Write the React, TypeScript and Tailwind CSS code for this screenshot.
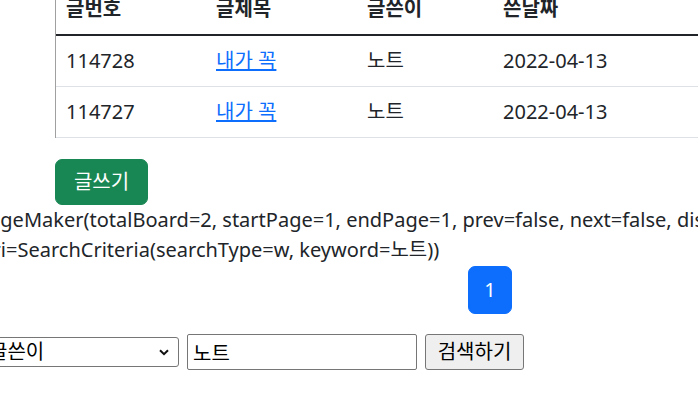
import React from 'react';

const rows = [
  { no: 114728, title: '내가 꼭', writer: '노트', date: '2022-04-13' },
  { no: 114727, title: '내가 꼭', writer: '노트', date: '2022-04-13' },
];

const cols = 'grid grid-cols-[150px_151px_136px_263px]';

export default function App() {
  return (
    <div
      className="relative w-[698px] h-[420px] overflow-hidden bg-white text-[20px] leading-[30px] text-[#212529]"
      style={{ fontFamily: '"Noto Sans", "Noto Sans CJK KR", sans-serif' }}
    >
      {/* board table */}
      <div className="ml-[55px] mt-[-16px] w-[700px] border-l border-[#a0a0a0]">
        <div className={`${cols} border-b-2 border-[#212529]`}>
          <div className="p-[10px] font-bold">글번호</div>
          <div className="p-[10px] font-bold">글제목</div>
          <div className="p-[10px] font-bold">글쓴이</div>
          <div className="p-[10px] font-bold">쓴날짜</div>
        </div>
        {rows.map((r) => (
          <div key={r.no} className={`${cols} border-b border-[#dee2e6]`}>
            <div className="p-[10px]">{r.no}</div>
            <div className="p-[10px]">
              <a href="#" className="text-[#0d6efd] underline">
                {r.title}
              </a>
            </div>
            <div className="p-[10px]">{r.writer}</div>
            <div className="p-[10px]">{r.date}</div>
          </div>
        ))}
      </div>

      <button className="mt-[21px] ml-[55px] flex h-[46px] w-[93px] items-center justify-center rounded-[7px] border border-[#198754] bg-[#198754] text-white">
        글쓰기
      </button>

      {/* pageMaker dump */}
      <div className="whitespace-nowrap ml-[-23px]">
        PageMaker(totalBoard=2, startPage=1, endPage=1, prev=false, next=false, displayPageNum=10,
      </div>
      <div className="whitespace-nowrap ml-[-17px]">
        cri=SearchCriteria(searchType=w, keyword=노트))
      </div>

      {/* pagination */}
      <div className="ml-[468px] mt-px flex h-[48px] w-[44px] items-center justify-center rounded-[7px] border border-[#0d6efd] bg-[#0d6efd] text-white">
        1
      </div>

      {/* search form */}
      <div className="mt-[20px] ml-[-16px] flex items-center gap-[8px]">
        <div className="relative">
          <select
            className="block h-[30px] w-[195px] appearance-none rounded-[3px] border border-[#767676] bg-white pl-[4px] leading-[26px] text-black"
            defaultValue="w"
          >
            <option value="t">제목</option>
            <option value="w">글쓴이</option>
          </select>
          <svg
            className="pointer-events-none absolute right-[10px] top-[12px]"
            width="10"
            height="7"
            viewBox="0 0 10 7"
          >
            <path d="M1 1.2 L5 5.2 L9 1.2" fill="none" stroke="#111" strokeWidth="2" />
          </svg>
        </div>
        <input
          className="h-[36px] w-[230px] rounded-[2px] border border-[#767676] px-[5px] text-black outline-none"
          defaultValue="노트"
        />
        <button className="h-[36px] w-[99px] rounded-[3px] border border-[#767676] bg-[#efefef] text-black">
          검색하기
        </button>
      </div>
    </div>
  );
}
